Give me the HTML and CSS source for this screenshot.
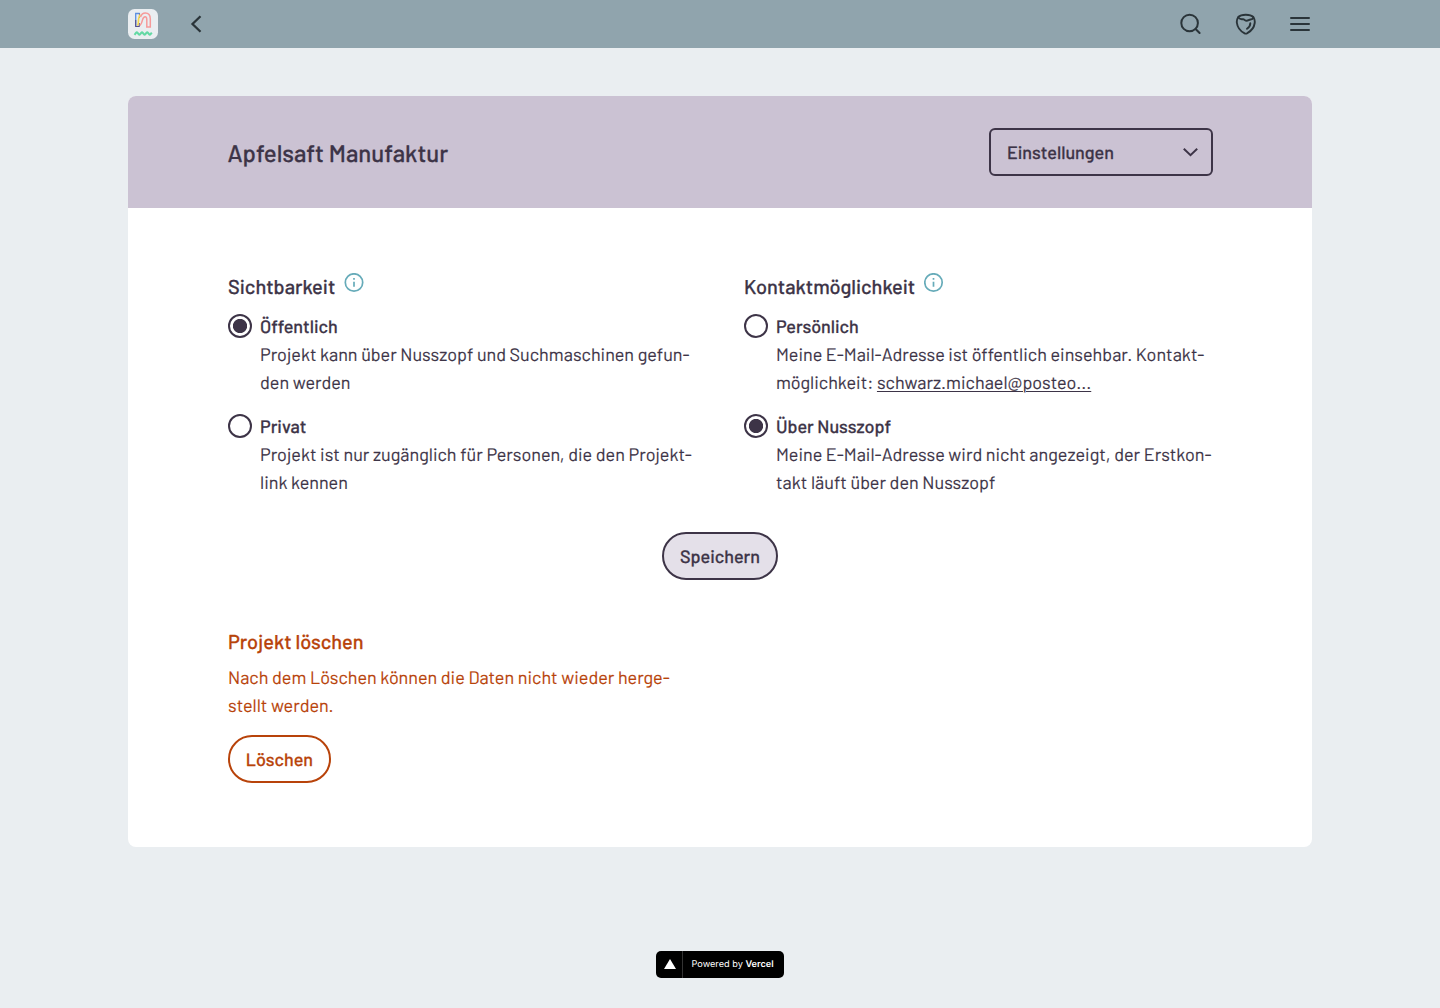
FILE: index.html
```html
<!DOCTYPE html>
<html lang="de">
<head>
<meta charset="utf-8">
<title>Apfelsaft Manufaktur – Einstellungen</title>
<link rel="stylesheet" href="styles.css">
</head>
<body>
<header class="topbar">
  <div class="topbar-inner">
    <div class="nav-group nav-left">
      <a class="logo" aria-label="Nusszopf">
        <svg width="30" height="30" viewBox="0 0 30 30" fill="none">
          <rect width="30" height="30" rx="6.500" fill="#eaeef1"/>
          <path d="M7.700 17.500v-13h4" stroke="#5b8fe0" stroke-width="1.300"/>
          <path d="M11.500 4.500V9M7.700 11v6.500h3.500V14" stroke="#56508c" stroke-width="1.100"/>
          <path d="M9.300 16.500c2-2 .6-5 1.500-7.500.5-1.500 1-2.300 1.200-3.500" stroke="#f6d84a" stroke-width="1.600"/>
          <path d="M12.500 8c1-2.700 2.500-3.900 4.800-3.900 3.200 0 5 2.300 5 6v7.800h-3.500v-7.400c0-1.800-.5-2.800-1.700-2.800-1.600 0-2.100 1.400-2.600 3.200-.4 2-.8 3.700-2.500 5.500" stroke="#f69a9a" stroke-width="1.500"/>
          <path d="m6.500 25.800 1.500-2q.8-1 1.600 0l1 1.400q.8 1 1.600 0l1-1.400q.8-1 1.600 0l1 1.400q.8 1 1.600 0l1-1.400q.8-1 1.600 0l1 1.400q.8 1 1.600 0l1.200-1.600" stroke="#62d9a4" stroke-width="2" stroke-linejoin="round"/>
        </svg>
      </a>
      <svg width="12" height="18" viewBox="0 0 12 18" fill="none" stroke="#2a3439" stroke-width="2.300"><path d="M10.500 1.200 2.500 9l8 7.800"/></svg>
    </div>
    <nav class="nav-group nav-right">
      <svg width="22" height="22" viewBox="0 0 22 22" fill="none" stroke="#2a3439" stroke-width="2" stroke-linecap="round"><circle cx="9.600" cy="10" r="8.300"/><path d="m15.600 16 4 4"/></svg>
      <svg width="22" height="22" viewBox="0 0 22 22" fill="none" stroke="#2a3439" stroke-width="1.900" stroke-linecap="round" stroke-linejoin="round"><path d="M3.300 4C5 2.200 8 1.700 10.800 1.700s5.800.5 7.500 2.300c1.200 1.900 1.700 3.900 1.400 6-.6 4.600-4 8.300-7.400 10.200-1 .6-2 .6-3 0C5.900 18.300 2.500 14.600 1.900 10c-.3-2.100.2-4.100 1.400-6Z"/><path d="M3.300 4.500c1.300 1.500 3 2.100 4.700 1.600 1.500.2 2 1.600 3.600 1.600 2 0 2-1.100 4-1.200 1.500-.1 2.300-.7 2.700-2M15.300 10.300c0 2.400-1.200 4.200-3.300 5.500"/></svg>
      <svg width="20" height="14" viewBox="0 0 20 14" stroke="#2a3439" stroke-width="2" stroke-linecap="round"><path d="M1 1h18M1 7h18M1 13h18"/></svg>
    </nav>
  </div>
</header>
<main class="card">
  <div class="card-head">
    <h1>Apfelsaft Manufaktur</h1>
    <button class="select">Einstellungen
      <svg width="16" height="10" viewBox="0 0 16 10" fill="none" stroke="#3d3447" stroke-width="2"><path d="m1.800 1.700 6.700 6.500 6.700-6.500"/></svg>
    </button>
  </div>
  <div class="card-body">
    <div class="columns">
      <section>
        <h2>Sichtbarkeit
          <svg class="info" width="20" height="20" viewBox="0 0 20 20" fill="none" stroke="#66abb9" stroke-width="1.700"><circle cx="10" cy="9.500" r="8.700"/><path d="M10 8.700v5M10 5v1.800"/></svg>
        </h2>
        <div class="option">
          <span class="radio checked"></span>
          <div><h3>Öffentlich</h3>
          <p>Projekt kann über Nusszopf und Suchmaschinen gefun-<br>den werden</p></div>
        </div>
        <div class="option">
          <span class="radio"></span>
          <div><h3>Privat</h3>
          <p>Projekt ist nur zugänglich für Personen, die den Projekt-<br>link kennen</p></div>
        </div>
      </section>
      <section>
        <h2>Kontaktmöglichkeit
          <svg class="info" width="20" height="20" viewBox="0 0 20 20" fill="none" stroke="#66abb9" stroke-width="1.700"><circle cx="9.500" cy="9.500" r="8.700"/><path d="M9.500 8.700v5M9.500 5v1.800"/></svg>
        </h2>
        <div class="option">
          <span class="radio"></span>
          <div><h3>Persönlich</h3>
          <p>Meine E-Mail-Adresse ist öffentlich einsehbar. Kontakt-<br>möglichkeit: <a class="mail">schwarz.michael@posteo...</a></p></div>
        </div>
        <div class="option">
          <span class="radio checked"></span>
          <div><h3>Über Nusszopf</h3>
          <p>Meine E-Mail-Adresse wird nicht angezeigt, der Erstkon-<br>takt läuft über den Nusszopf</p></div>
        </div>
      </section>
    </div>
    <button class="pill save">Speichern</button>
    <section class="danger">
      <h2>Projekt löschen</h2>
      <p>Nach dem Löschen können die Daten nicht wieder herge-<br>stellt werden.</p>
      <button class="pill delete">Löschen</button>
    </section>
  </div>
</main>
<footer class="footer">
  <a class="vercel">
    <span class="mark"><svg width="12" height="10" viewBox="0 0 12 10"><path d="M6 0l6 10H0z" fill="#fff"/></svg></span>
    <span class="powered">Powered by <b>Vercel</b></span>
  </a>
</footer>
</body>
</html>
```
FILE: styles.css
```css
* { box-sizing: border-box; }
body { margin: 0; min-height: 1008px; background: #eaeef1; color: #3d3447; font-family: Barlow, Roboto, sans-serif; font-size: 18px; line-height: 28px; text-rendering: geometricPrecision; }
h1, h2, h3, p { margin: 0; font-weight: 400; }
h1, h2, h3, button { -webkit-text-stroke: 0.25px currentColor; }
p { -webkit-text-stroke: 0.15px currentColor; }
svg { display: block; flex: none; }
.topbar { height: 48px; background: #90a4ad; }
.topbar-inner { width: 1184px; height: 48px; margin: 0 auto; display: flex; justify-content: space-between; align-items: center; }
.nav-group { display: flex; align-items: center; }
.nav-left { gap: 32px; }
.nav-right { gap: 33px; padding-right: 2px; }
.card { width: 1184px; height: 751px; margin: 48px auto 0; background: #fff; border-radius: 8px; overflow: hidden; }
.card-head { height: 112px; padding: 0 99px 0 99.500px; background: #cbc2d3; display: flex; justify-content: space-between; align-items: center; }
h1 { font-size: 24px; font-weight: 500; line-height: 32px; padding-top: 2px; }
button { font: inherit; color: inherit; font-weight: 500; cursor: pointer; text-rendering: inherit; }
.select { width: 224px; height: 48px; padding: 0 13px 0 16px; border: 2px solid #3d3447; border-radius: 6px; background: transparent; display: flex; align-items: center; justify-content: space-between; }
.card-body { padding: 64px 100px; }
.columns { display: grid; grid-template-columns: 468px 468px; gap: 48px; }
h2 { display: flex; gap: 9px; height: 32px; font-size: 20px; font-weight: 500; line-height: 30px; }
.columns h2 { line-height: 28px; margin-bottom: 8px; }
.info { margin-top: 1px; }
.option { display: flex; gap: 8px; margin-bottom: 16px; }
.radio { flex: none; width: 24px; height: 24px; margin-top: 1.500px; border: 2px solid #3d3447; border-radius: 50%; }
.checked { background: radial-gradient(circle, #3d3447 6.700px, transparent 7.500px); }
h3 { font-size: inherit; font-weight: 500; }
.pill { display: flex; align-items: center; justify-content: center; height: 48px; padding: 0; border: 2px solid #3d3447; border-radius: 24px; background: #e4e0e9; }
.save { width: 116px; margin: 19.500px auto 0; }
.danger { color: #b8430a; margin-top: 46.500px; }
.danger p { padding-top: 5px; }
.delete { width: 103px; margin-top: 16px; border-color: #b8430a; background: #fff; }
.mail { text-decoration: underline; text-underline-offset: 2px; text-decoration-thickness: 1px; }
.footer { display: flex; justify-content: center; padding-top: 104px; }
.vercel { width: 128px; height: 27px; display: flex; background: #000; border-radius: 5px; color: #fff; font: 9.200px/28px Inter, sans-serif; }
.mark { width: 27px; display: flex; align-items: center; justify-content: center; padding: 0 0 1px 2px; border-right: 1px solid #333; }
.powered { padding-left: 8.500px; }
.vercel b { font-weight: 600; }
```
